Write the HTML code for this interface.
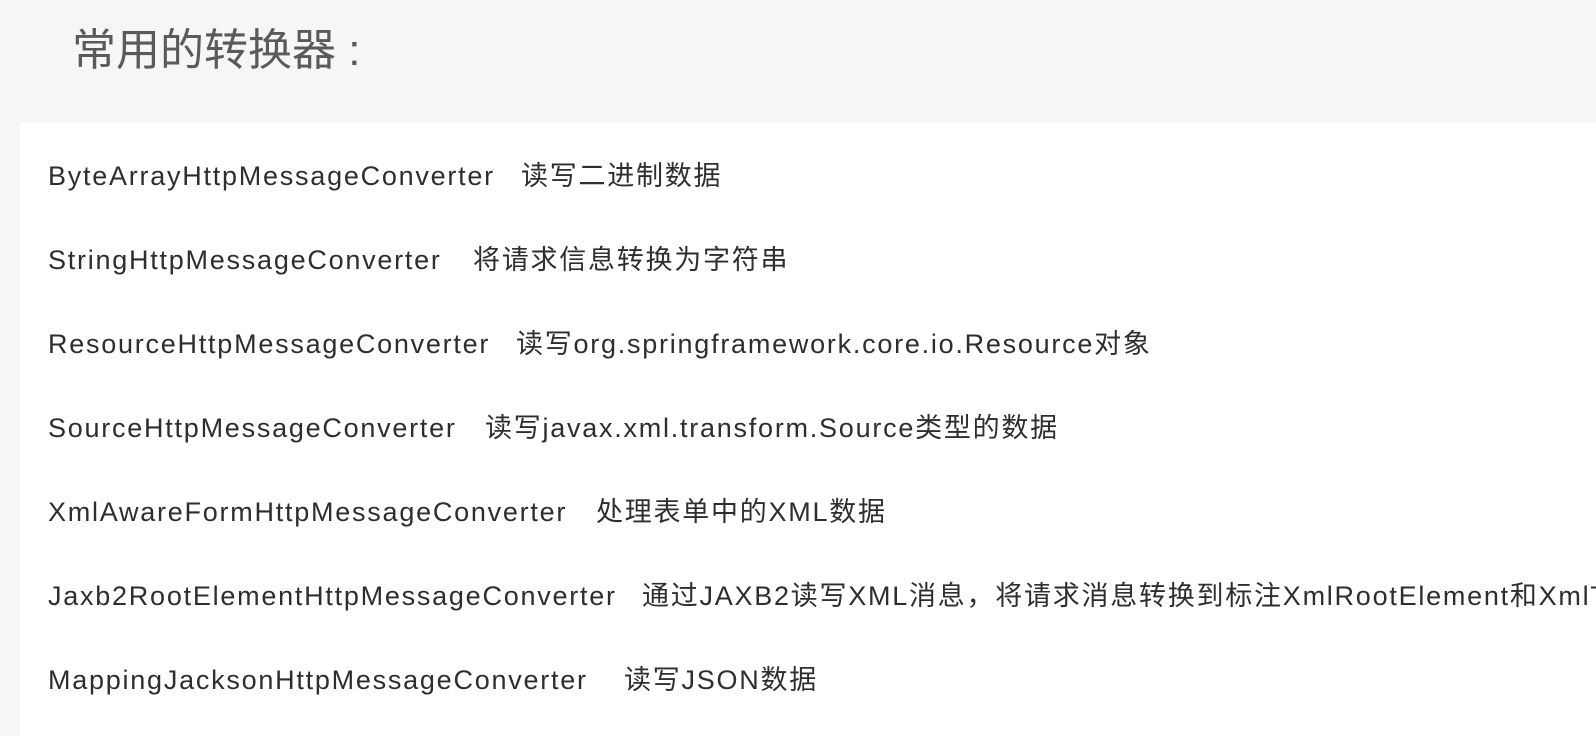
<!DOCTYPE html>
<html><head><meta charset="utf-8"><style>
html,body{margin:0;padding:0;width:1596px;height:736px;overflow:hidden;background:#f6f6f6;}
.t{position:absolute;left:72px;top:14px;font:44px "Liberation Sans","Noto Sans CJK SC",sans-serif;color:#5a5a5a;}
.p{position:absolute;left:20px;top:122px;right:0;bottom:0;background:#fff;}
.r{position:absolute;font:27px "Liberation Sans","Noto Sans CJK SC",sans-serif;color:#2e2e2e;white-space:nowrap;line-height:30px;letter-spacing:1.75px;}
</style></head><body>
<div class="t">常用的转换器 :</div>
<div class="p"></div>
<div class="r" style="left:48px;top:161px">ByteArrayHttpMessageConverter</div><div class="r" style="left:521px;top:161px">读写二进制数据</div>
<div class="r" style="left:48px;top:245px">StringHttpMessageConverter</div><div class="r" style="left:473px;top:245px">将请求信息转换为字符串</div>
<div class="r" style="left:48px;top:329px">ResourceHttpMessageConverter</div><div class="r" style="left:516px;top:329px">读写org.springframework.core.io.Resource对象</div>
<div class="r" style="left:48px;top:413px">SourceHttpMessageConverter</div><div class="r" style="left:485px;top:413px">读写javax.xml.transform.Source类型的数据</div>
<div class="r" style="left:48px;top:497px">XmlAwareFormHttpMessageConverter</div><div class="r" style="left:596px;top:497px">处理表单中的XML数据</div>
<div class="r" style="left:48px;top:581px">Jaxb2RootElementHttpMessageConverter</div><div class="r" style="left:642px;top:581px">通过JAXB2读写XML消息，将请求消息转换到标注XmlRootElement和XmlType</div>
<div class="r" style="left:48px;top:665px">MappingJacksonHttpMessageConverter</div><div class="r" style="left:624px;top:665px">读写JSON数据</div>
</body></html>
